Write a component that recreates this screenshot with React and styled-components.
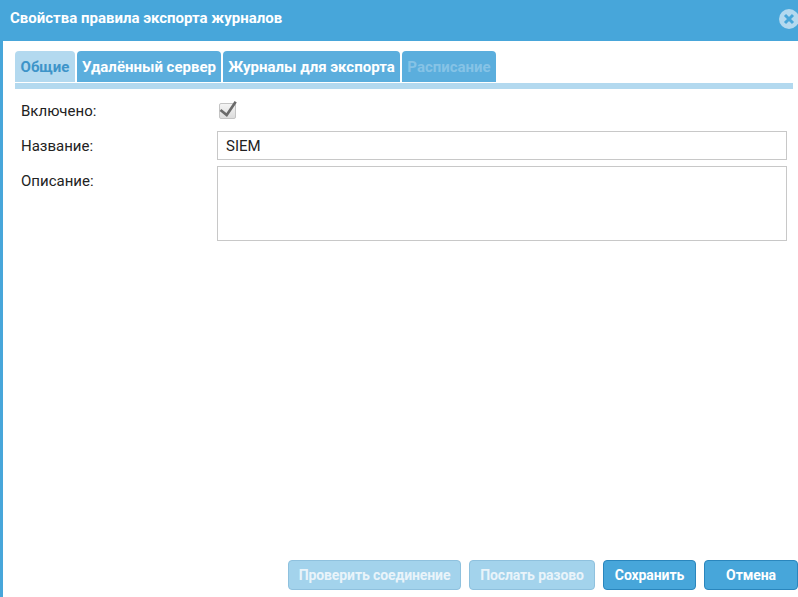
import React from 'react';
import styled, { createGlobalStyle } from 'styled-components';

const GlobalStyles = createGlobalStyle`
	html, body {
		margin: 0;
		padding: 0;
		overflow: hidden;
	}

	* {
		box-sizing: border-box;
		font-family: Roboto, "Liberation Sans", sans-serif;
	}
`;

const Dialog = styled.div`
	display: flex;
	flex-direction: column;
	width: 798px;
	height: 597px;
	background: #fff;
	border-left: 3px solid #47a6da;
	overflow: hidden;
`;

const Header = styled.div`
	display: flex;
	align-items: center;
	justify-content: space-between;
	flex: 0 0 41px;
	margin-left: -3px;
	padding: 0 0 5px 10px;
	background: #47a6da;

	h1 {
		margin: 0;
		font-size: 15px;
		font-weight: 700;
		color: #fff;
	}
`;

const CloseIcon = styled.svg`
	flex: none;
	width: 20px;
	height: 20px;
	margin-right: -1px;
	margin-top: 1px;
`;

const Body = styled.div`
	display: flex;
	flex-direction: column;
	flex: 1;
	padding: 10px 0 0 12px;
`;

const Tabs = styled.div`
	display: flex;
	gap: 2px;
	height: 32px;
	margin-right: -1px;
`;

const Tab = styled.div`
	display: flex;
	align-items: center;
	justify-content: center;
	width: ${p => p.$width}px;
	height: 31px;
	border-radius: 4px 4px 0 0;
	font-size: 15px;
	font-weight: 700;
	background: ${p => (p.$active ? '#b3d9ef' : '#5baedd')};
	color: ${p => (p.$active ? '#3d94c9' : p.$disabled ? '#86c3e6' : '#fff')};
`;

const Strip = styled.div`
	height: 6px;
	background: #b3d9ef;
	margin-right: 5px;
`;

const Form = styled.div`
	display: grid;
	grid-template-columns: 196px 570px;
	grid-auto-rows: min-content;
	row-gap: 6px;
	padding: 7px 0 0 6px;
`;

const Label = styled.label`
	display: flex;
	align-items: ${p => (p.$top ? 'flex-start' : 'center')};
	padding-top: ${p => (p.$top ? '6px' : '0')};
	font-size: 15px;
	color: #222;
`;

const CheckCell = styled.div`
	display: flex;
	align-items: center;
	height: 29px;
	padding-left: 2px;
`;

const CheckBox = styled.div`
	position: relative;
	width: 17px;
	height: 16px;
	border: 1px solid #c4c4c4;
	border-radius: 2px;
	background: linear-gradient(#f4f4f4, #dcdcdc);

	svg {
		position: absolute;
		left: -1px;
		top: -4px;
		width: 20px;
		height: 20px;
	}
`;

const TextInput = styled.div`
	display: flex;
	align-items: center;
	height: 29px;
	padding: 0 8px;
	border: 1px solid #c8c8c8;
	font-size: 15px;
	color: #222;
`;

const TextArea = styled.div`
	height: 75px;
	border: 1px solid #c8c8c8;
`;

const Footer = styled.div`
	display: flex;
	justify-content: flex-end;
	gap: 8px;
	margin-top: auto;
	padding-bottom: 7px;
`;

const Button = styled.button`
	width: ${p => p.$width}px;
	height: 30px;
	padding: 0;
	border: 1px solid ${p => (p.$muted ? '#8fc1de' : '#2a86bd')};
	border-radius: 4px;
	font-size: 14px;
	font-weight: 700;
	letter-spacing: -0.1px;
	color: ${p => (p.$muted ? '#e9f4fa' : '#fff')};
	background: ${p => (p.$muted ? '#a3d3ec' : '#47a6da')};
`;

const App = () => (
	<Dialog>
		<GlobalStyles />
		<Header>
			<h1>Свойства правила экспорта журналов</h1>
			<CloseIcon viewBox="0 0 20 20">
				<circle cx="10" cy="10" r="10" fill="#b3d9ef" />
				<path d="M6 6l8 8M14 6l-8 8" stroke="#47a6da" strokeWidth="3" />
			</CloseIcon>
		</Header>
		<Body>
			<Tabs>
				<Tab $active $width={60}>Общие</Tab>
				<Tab $width={144}>Удалённый сервер</Tab>
				<Tab $width={177}>Журналы для экспорта</Tab>
				<Tab $disabled $width={94}>Расписание</Tab>
			</Tabs>
			<Strip />
			<Form>
				<Label>Включено:</Label>
				<CheckCell>
					<CheckBox>
						<svg viewBox="0 0 20 20">
							<path d="M1.5 10l6.2 5 9-13.3" fill="none" stroke="#6a6a6a" strokeWidth="2.6" />
						</svg>
					</CheckBox>
				</CheckCell>
				<Label>Название:</Label>
				<TextInput>SIEM</TextInput>
				<Label $top>Описание:</Label>
				<TextArea />
			</Form>
			<Footer>
				<Button $muted $width={173}>Проверить соединение</Button>
				<Button $muted $width={126}>Послать разово</Button>
				<Button $width={93}>Сохранить</Button>
				<Button $width={94}>Отмена</Button>
			</Footer>
		</Body>
	</Dialog>
);

export default App;
